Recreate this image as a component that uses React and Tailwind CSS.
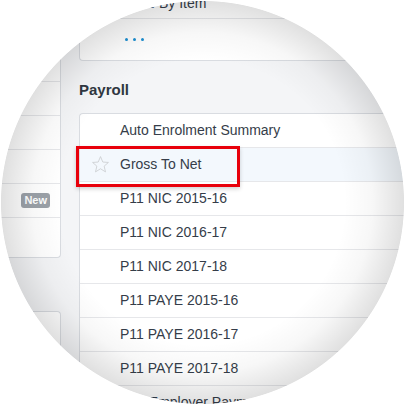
import React from 'react';

const rows = [
    'Auto Enrolment Summary',
    'Gross To Net',
    'P11 NIC 2015-16',
    'P11 NIC 2016-17',
    'P11 NIC 2017-18',
    'P11 PAYE 2015-16',
    'P11 PAYE 2016-17',
    'P11 PAYE 2017-18',
    'P32 Employer Payment Summary',
];

const StarOutline = () => (
    <svg width="19" height="19" viewBox="0 0 24 24" fill="none">
        <polygon
            points="12,2 14.9,8.9 22,9.4 16.6,14.1 18.3,21.3 12,17.4 5.7,21.3 7.4,14.1 2,9.4 9.1,8.9"
            stroke="#c9cbce"
            strokeWidth="1"
            strokeLinejoin="miter"
        />
    </svg>
);

const ReportRow = ({ label }) => {
    const active = label === 'Gross To Net';
    return (
        <div className={`relative flex h-[34px] items-center border-b border-[#e6e7ea] ${active ? 'bg-[#f3f8fd]' : ''}`}>
            <div className="flex w-[40px] shrink-0 items-center justify-center">
                {active && <StarOutline />}
            </div>
            <span className="whitespace-nowrap text-[14px] text-[#353d49]">{label}</span>
            {active && (
                <div className="pointer-events-none absolute left-[-4px] top-[-2px] h-[41px] w-[164px] border-[3px] border-[#e8000b] shadow-[0_2px_4px_rgba(0,0,0,0.18)]" />
            )}
        </div>
    );
};

export default function App() {
    return (
        <div className="relative h-[405px] w-[405px] overflow-hidden bg-[#f4f5f7] font-['Liberation_Sans',Arial,sans-serif]">
            <div className="flex">
                {/* left column */}
                <div className="w-[61px] shrink-0">
                    <div className="rounded-br-[4px] border-b border-r border-[#d9dce1] bg-white">
                        <div className="h-[82px] border-b border-[#e6e7ea]" />
                        <div className="h-[34px] border-b border-[#e6e7ea]" />
                        <div className="h-[34px] border-b border-[#e6e7ea]" />
                        <div className="h-[34px] border-b border-[#e6e7ea]" />
                        <div className="flex h-[34px] items-center justify-end border-b border-[#e6e7ea] pr-[10px]">
                            <span className="rounded-[3px] bg-[#9ba1a8] px-[3px] text-[11px] font-bold leading-[15px] text-white">New</span>
                        </div>
                        <div className="h-[39px]" />
                    </div>
                    <div className="mt-[53px] h-[200px] rounded-tr-[4px] border-r border-t border-[#d9dce1] bg-white" />
                </div>

                {/* main column */}
                <div className="-mr-[40px] flex-1 pl-[18px]">
                    <div className="-mt-[15px] rounded-bl-[4px] border-b border-l border-[#d9dce1] bg-white">
                        <div className="flex h-[34px] items-center border-b border-[#e6e7ea] pl-[40px] pt-[4px]">
                            <span className="whitespace-nowrap text-[14px] text-[#353d49]">Sales By Item</span>
                        </div>
                        <div className="flex h-[41px] items-center gap-[5px] pl-[45px]">
                            <span className="h-[3px] w-[3px] rounded-full bg-[#1b8fd2]" />
                            <span className="h-[3px] w-[3px] rounded-full bg-[#1b8fd2]" />
                            <span className="h-[3px] w-[3px] rounded-full bg-[#1b8fd2]" />
                        </div>
                    </div>

                    <h2 className="mt-[19px] h-[20px] text-[15px] font-bold leading-[20px] text-[#2f3741]">Payroll</h2>

                    <div className="mt-[13px] rounded-tl-[4px] border-l border-t border-[#d9dce1] bg-white">
                        {rows.map((r) => (
                            <ReportRow key={r} label={r} />
                        ))}
                    </div>
                </div>
            </div>

            {/* round lens vignette */}
            <div className="pointer-events-none absolute inset-0 bg-[radial-gradient(circle_closest-side,rgba(0,0,0,0)_70%,rgba(0,0,0,0.03)_84%,rgba(0,0,0,0.12)_99.3%,#ffffff_99.7%)]" />
        </div>
    );
}
